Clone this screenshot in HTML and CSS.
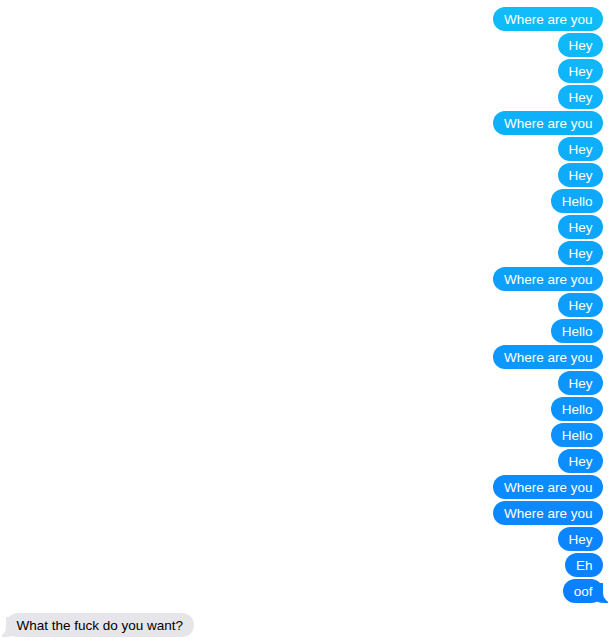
FILE: index.html
```html
<!DOCTYPE html>
<html>
<head>
<meta charset="utf-8">
<link rel="stylesheet" href="styles.css">
</head>
<body>
<div class="thread">
  <div class="bubble sent">Where are you</div>
  <div class="bubble sent">Hey</div>
  <div class="bubble sent">Hey</div>
  <div class="bubble sent">Hey</div>
  <div class="bubble sent">Where are you</div>
  <div class="bubble sent">Hey</div>
  <div class="bubble sent">Hey</div>
  <div class="bubble sent">Hello</div>
  <div class="bubble sent">Hey</div>
  <div class="bubble sent">Hey</div>
  <div class="bubble sent">Where are you</div>
  <div class="bubble sent">Hey</div>
  <div class="bubble sent">Hello</div>
  <div class="bubble sent">Where are you</div>
  <div class="bubble sent">Hey</div>
  <div class="bubble sent">Hello</div>
  <div class="bubble sent">Hello</div>
  <div class="bubble sent">Hey</div>
  <div class="bubble sent">Where are you</div>
  <div class="bubble sent">Where are you</div>
  <div class="bubble sent">Hey</div>
  <div class="bubble sent">Eh</div>
  <div class="bubble sent tail">oof</div>
  <div class="bubble received tail">What the fuck do you want?</div>
</div>
</body>
</html>
```

FILE: styles.css
```css
html {
  margin: 0;
  padding: 0;
  background: #ffffff;
}

body {
  margin: 0;
  padding: 0;
  font-family: "Liberation Sans", Helvetica, Arial, sans-serif;
  font-size: 13.5px;
  -webkit-font-smoothing: antialiased;
}

.thread {
  display: flex;
  flex-direction: column;
  align-items: flex-end;
  gap: 2px;
  padding: 7px 5px 0 6px;
}

.bubble {
  position: relative;
  box-sizing: border-box;
  height: 24px;
  line-height: 23px;
  padding: 1px 10.5px 0;
  border-radius: 12px;
  white-space: nowrap;
}

.sent {
  color: #ffffff;
  background: linear-gradient(to bottom, #10bdf9 0%, #0a7bff 100%);
  background-attachment: fixed;
}

.received {
  align-self: flex-start;
  margin-top: 8px;
  color: #000000;
  background: #e5e5ea;
}

.tail::before,
.tail::after {
  content: "";
  position: absolute;
  bottom: 0;
  height: 20px;
  z-index: -1;
}

.sent.tail::before {
  right: -5px;
  width: 20px;
  background: linear-gradient(to bottom, #10bdf9 0%, #0a7bff 100%);
  background-attachment: fixed;
  border-bottom-left-radius: 16px 14px;
}

.sent.tail::after {
  right: -26px;
  width: 26px;
  background: #ffffff;
  border-bottom-left-radius: 10px;
}

.received.tail::before {
  left: -4px;
  width: 20px;
  background: #e5e5ea;
  border-bottom-right-radius: 16px 14px;
}

.received.tail::after {
  left: -26px;
  width: 26px;
  background: #ffffff;
  border-bottom-right-radius: 10px;
}
```
